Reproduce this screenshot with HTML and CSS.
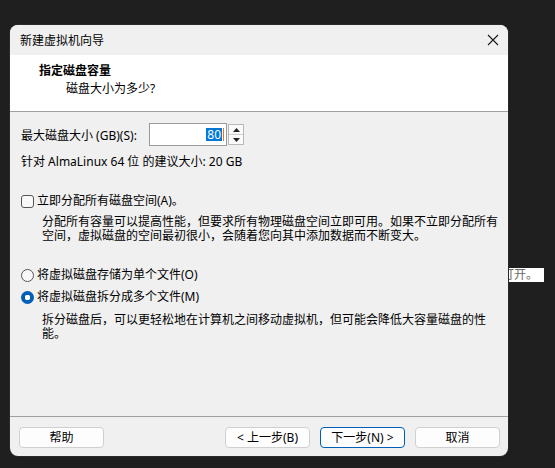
FILE: index.html
```html
<!DOCTYPE html>
<html lang="zh-CN">
<head>
<meta charset="utf-8">
<title>新建虚拟机向导</title>
<link rel="stylesheet" href="styles.css">
</head>
<body>
<div class="desk-snippet">打开。</div>
<div class="window">
  <div class="titlebar">
    <span class="title">新建虚拟机向导</span>
    <svg class="close" width="12" height="12" viewBox="0 0 12 12"><path d="M1 1 L11 11 M11 1 L1 11" stroke="#1a1a1a" stroke-width="1.1" fill="none"/></svg>
  </div>
  <div class="header">
    <div class="h-title">指定磁盘容量</div>
    <div class="h-sub">磁盘大小为多少?</div>
  </div>
  <div class="content">
    <div class="size-row">
      <span class="size-label">最大磁盘大小 (GB)(S):</span>
      <div class="num-input"><span class="sel">80</span><span class="caret"></span></div>
      <div class="spinner">
        <div class="spin-btn"><svg width="7" height="4" viewBox="0 0 7 4"><path d="M0 4 L3.5 0 L7 4 Z" fill="#222"/></svg></div>
        <div class="spin-btn"><svg width="7" height="4" viewBox="0 0 7 4"><path d="M0 0 L3.5 4 L7 0 Z" fill="#222"/></svg></div>
      </div>
    </div>
    <div class="hint">针对 AlmaLinux 64 位 的建议大小: 20 GB</div>
    <div class="opt opt-check">
      <span class="checkbox"></span>
      <span>立即分配所有磁盘空间(A)。</span>
    </div>
    <p class="desc">分配所有容量可以提高性能，但要求所有物理磁盘空间立即可用。如果不立即分配所有空间，虚拟磁盘的空间最初很小，会随着您向其中添加数据而不断变大。</p>
    <div class="opt opt-radio1">
      <span class="radio"></span>
      <span>将虚拟磁盘存储为单个文件(O)</span>
    </div>
    <div class="opt opt-radio2">
      <span class="radio checked"></span>
      <span>将虚拟磁盘拆分成多个文件(M)</span>
    </div>
    <p class="desc desc2">拆分磁盘后，可以更轻松地在计算机之间移动虚拟机，但可能会降低大容量磁盘的性能。</p>
  </div>
  <div class="footer">
    <button class="btn">帮助</button>
    <div class="spacer"></div>
    <button class="btn">&lt; 上一步(B)</button>
    <button class="btn default">下一步(N) &gt;</button>
    <button class="btn">取消</button>
  </div>
</div>
</body>
</html>
```

FILE: styles.css
```css
* { box-sizing: border-box; }
html, body { margin: 0; }
body {
  width: 555px;
  height: 468px;
  overflow: hidden;
  background: #1f1f1f;
  position: relative;
  padding: 25px 0 0 10px;
  font-family: "Noto Sans", "Noto Sans CJK SC", sans-serif;
  font-size: 12px;
  color: #000;
}
.desk-snippet {
  position: absolute;
  left: 498px;
  top: 268px;
  width: 46px;
  height: 14px;
  background: #fff;
  color: #6a6a6a;
  line-height: 14px;
  text-align: right;
  padding-right: 6px;
  font-size: 12px;
  z-index: 0;
}
.window {
  position: relative;
  z-index: 1;
  width: 498px;
  height: 431px;
  background: #f0f0f0;
  border-radius: 8px;
  overflow: hidden;
  display: flex;
  flex-direction: column;
  box-shadow: 0 0 0 1px #2a2a2a;
}
.titlebar {
  height: 30px;
  flex: none;
  display: flex;
  align-items: center;
  padding: 0 9px 0 10px;
  background: #f0f0f0;
}
.title { flex: 1; line-height: 16px; padding-top: 1px; }
.close { margin-right: 0; }
.header {
  flex: none;
  height: 57px;
  background: #fff;
  border-bottom: 1px solid #a0a0a0;
  padding: 8px 0 0 29px;
}
.h-title { font-weight: bold; line-height: 16px; }
.h-sub { line-height: 16px; margin-top: 2px; padding-left: 27px; }
.content {
  flex: none;
  height: 304px;
  padding: 11px 0 0 11px;
}
.size-row { display: flex; align-items: center; height: 23px; }
.size-label { width: 128px; flex: none; }
.num-input {
  width: 78px;
  height: 23px;
  border: 1px solid #9a9a9a;
  background: #fff;
  display: flex;
  align-items: center;
  justify-content: flex-end;
  padding-right: 2px;
}
.sel {
  background: #0078d7;
  color: #fff;
  line-height: 13px;
  padding: 0 1px;
}
.caret { width: 1px; height: 13px; background: #e8731a; margin-left: 1px; }
.spinner {
  margin-left: 1px;
  width: 16px;
  height: 21px;
  border: 1px solid #b8b8b8;
  display: flex;
  flex-direction: column;
  background: #fafafa;
}
.spin-btn {
  flex: 1;
  display: flex;
  align-items: center;
  justify-content: center;
}
.spin-btn + .spin-btn { border-top: 1px solid #d0d0d0; }
.hint { line-height: 16px; margin-top: 8px; }
.opt { display: flex; align-items: center; gap: 3px; line-height: 16px; }
.opt-check { margin-top: 23px; }
.checkbox {
  width: 13px;
  height: 13px;
  border: 1px solid #555;
  border-radius: 3px;
  background: #f8f8f8;
}
.radio {
  width: 13px;
  height: 13px;
  border: 1px solid #555;
  border-radius: 50%;
  background: #f8f8f8;
}
.radio.checked {
  border: none;
  background: radial-gradient(circle, #fff 0 2.6px, #005fb8 3px);
}
.desc {
  margin: 6px 0 0 0;
  padding-left: 21px;
  width: 488px;
  line-height: 14px;
}
.opt-radio1 { margin-top: 24px; }
.opt-radio2 { margin-top: 6px; }
.desc2 { margin-top: 8px; }
.footer {
  flex: none;
  border-top: 1px solid #a0a0a0;
  padding: 10px 8px 0 9px;
  display: flex;
  gap: 10px;
}
.spacer { flex: 1; }
.btn {
  width: 85px;
  height: 21px;
  border: 1px solid #d0d0d0;
  border-radius: 4px;
  background: #fdfdfd;
  font-family: inherit;
  font-size: 12px;
  color: #000;
  padding: 0;
  line-height: 19px;
}
.btn.default { border-color: #005fb8; }
```
